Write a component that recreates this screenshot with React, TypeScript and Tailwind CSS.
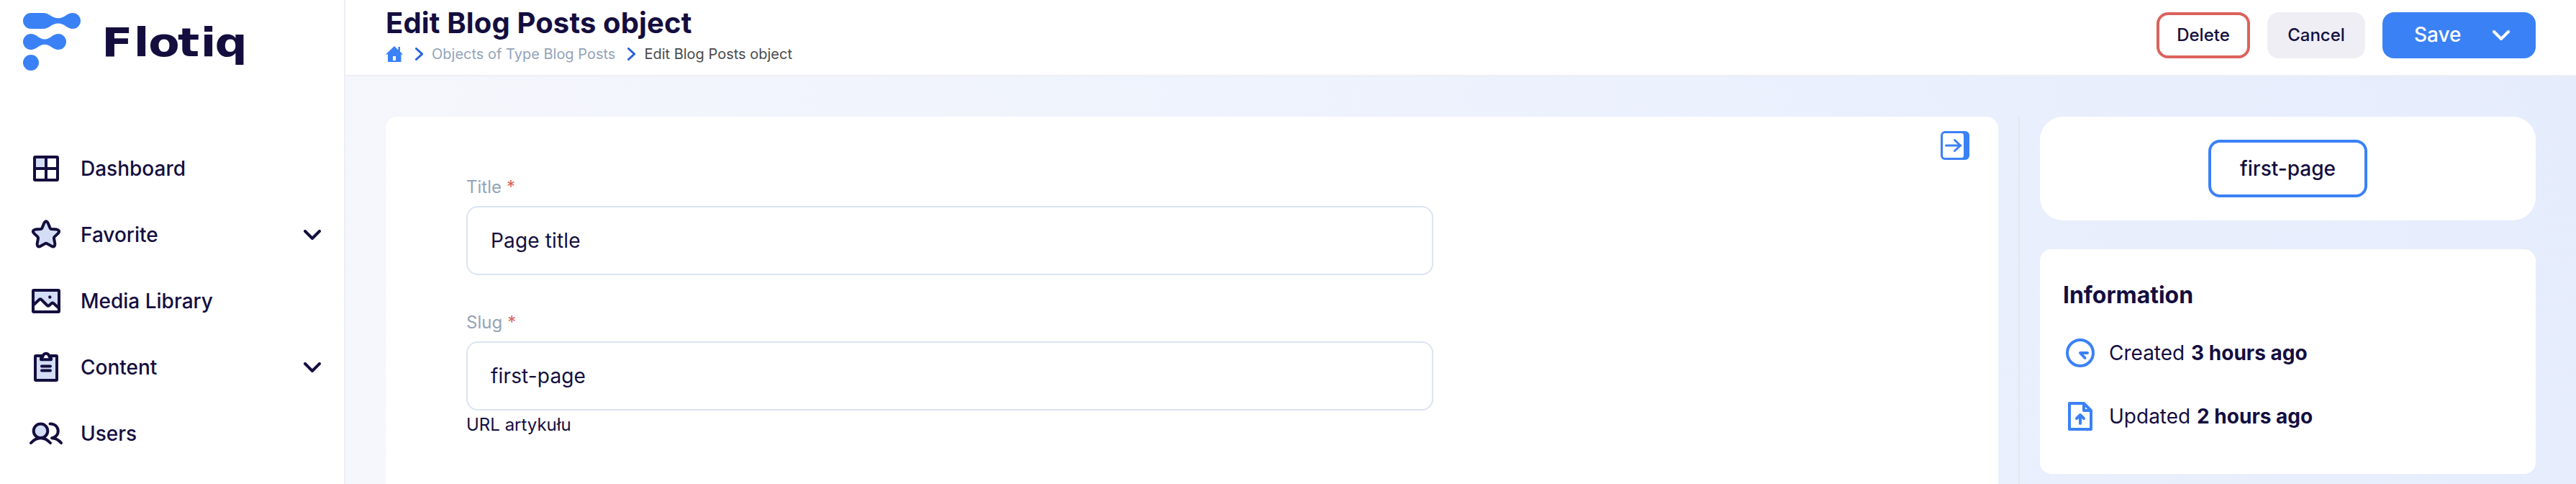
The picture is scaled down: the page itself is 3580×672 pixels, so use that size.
import type { ReactNode } from "react";

const INK = "#140e3f";
const BLUE = "#3b81f6";
const PALE = "#d3ddf5";

function Chevron({ className, stroke }: { className: string; stroke: string }) {
  return (
    <svg className={className} viewBox="0 0 24 14" fill="none" stroke={stroke} strokeWidth="4" strokeLinecap="round" strokeLinejoin="round">
      <path d="M2 2L12 12L22 2" />
    </svg>
  );
}

function CrumbArrow() {
  return (
    <svg className="ml-[17px] h-[18px] w-[11px]" viewBox="0 0 11 18" fill="none" stroke="#2563d9" strokeWidth="3" strokeLinecap="round">
      <path d="M1.500 1.500L9.500 9L1.500 16.500" />
    </svg>
  );
}

function Logo() {
  return (
    <svg className="block h-[100px] w-[360px]" viewBox="0 0 360 100">
      <g fill={BLUE}>
        <path d="M43 18H60C68 18 72 25.200 81 25.200C90 25.200 93 18 101 18A11 11 0 0 1 101 40C93 40 90 32.500 81 32.500C72 32.500 68 40 60 40H43A11 11 0 0 1 43 18Z" />
        <path d="M43 47C51 47 54 54.500 62 54.500C70 54.500 73 47 81 47A11 11 0 0 1 81 69C73 69 70 61.800 62 61.800C54 61.800 51 69 43 69A11 11 0 0 1 43 47Z" />
        <circle cx="43" cy="87" r="11" />
      </g>
      <text transform="scale(1.15 1)" x="122.800 161.500 179.400 214.800 242.300 259.600" y="78" fill={INK} fontFamily="DejaVu Sans" fontWeight="700" fontSize="55">Flotiq</text>
    </svg>
  );
}

function NavIcon({ children }: { children: ReactNode }) {
  return (
    <svg className="h-12 w-12 shrink-0" viewBox="0 0 48 48" fill="none" stroke={INK} strokeWidth="4" strokeLinecap="round" strokeLinejoin="round">
      {children}
    </svg>
  );
}

function NavItem({ icon, label, more }: { icon: ReactNode; label: string; more?: boolean }) {
  return (
    <a className="flex h-[92px] items-center pl-10 pr-8">
      {icon}
      <span className="ml-6 flex-1 text-[28px] font-medium leading-10">{label}</span>
      {more && <Chevron className="h-[14px] w-6" stroke={INK} />}
    </a>
  );
}

function Field({ label, value, hint }: { label: string; value: string; hint?: string }) {
  return (
    <div className="w-[1344px]">
      <div className="flex h-11 gap-[7px] text-2xl leading-[36px] text-[#94a3b8]">
        {label}
        <span className="text-[#dc625c]">*</span>
      </div>
      <div className="flex h-24 items-center rounded-2xl border-2 border-[#dbe4f3] pl-8 text-[28px] tracking-[0.15px]">{value}</div>
      {hint && <div className="mt-[2px] h-[44px] text-2xl leading-[36px]">{hint}</div>}
    </div>
  );
}

export default function App() {
  return (
    <div className="flex h-[672px] w-[3580px] overflow-hidden bg-white font-['Inter',sans-serif] text-[#140e3f]">
      <aside className="w-[480px] shrink-0 border-r-2 border-[#eeeef6]">
        <Logo />
        <nav className="mt-[88px]">
          <NavItem
            label="Dashboard"
            icon={
              <NavIcon>
                <path d="M8 8H24V24H8Z" fill={PALE} stroke="none" />
                <rect x="8" y="8" width="32" height="32" rx="1" />
                <path d="M24 8V40M8 24H40" />
              </NavIcon>
            }
          />
          <NavItem
            more
            label="Favorite"
            icon={
              <NavIcon>
                <path fill={PALE} d="M21.300 7.800Q24 2.600 26.700 7.800L29.500 14.500Q30 15.800 31.500 16L38.600 16.600Q44.400 17.900 40.600 22.100L35.600 26.900Q34.700 27.900 35 29.200L36.300 36.200Q36.600 42.300 31.300 39.600L25.300 36.300Q24 35.500 22.700 36.300L16.700 39.600Q11.400 42.300 11.700 36.200L13 29.200Q13.300 27.900 12.400 26.900L7.400 22.100Q3.600 17.900 9.400 16.600L16.500 16Q18 15.800 18.500 14.500Z" />
              </NavIcon>
            }
          />
          <NavItem
            label="Media Library"
            icon={
              <NavIcon>
                <path d="M6 9H42V34L33 26L27 32L16 21L6 31Z" fill={PALE} stroke="none" />
                <rect x="6" y="9" width="36" height="30" rx="1" />
                <path d="M6 30L14.500 22Q16 20.600 17.500 22L25.500 30Q27 31.400 28.500 30L31.500 27.200Q33 26 34.500 27.200L42 34" />
                <circle cx="29.300" cy="18.500" r="2.200" fill={INK} stroke="none" />
              </NavIcon>
            }
          />
          <NavItem
            more
            label="Content"
            icon={
              <NavIcon>
                <rect x="9" y="8" width="30" height="34" rx="1" fill={PALE} />
                <path fill="#fff" d="M17 13.200V11.500Q17.200 9.600 19.200 9.400Q20.500 4.800 24 4.800Q27.500 4.800 28.800 9.400Q30.800 9.600 31 11.500V13.200Z" />
                <path d="M18 22.500H30M18 28.500H30" />
              </NavIcon>
            }
          />
          <NavItem
            label="Users"
            icon={
              <NavIcon>
                <circle cx="16.500" cy="20.300" r="9.800" fill={PALE} />
                <path d="M3 37Q9 30.300 16.500 30.300Q24 30.300 30 37M29.500 10.500A9.800 9.800 0 0 1 32 30.300Q39.500 30.500 45 37" />
              </NavIcon>
            }
          />
        </nav>
      </aside>

      <div className="flex min-w-0 flex-1 flex-col">
        <header className="flex h-[106px] shrink-0 justify-between border-b-2 border-[#eeeef4] bg-white pl-14 pr-14">
          <div>
            <h1 className="mt-2 text-[40px] font-bold leading-[48px] tracking-[0.14px]">Edit Blog Posts object</h1>
            <div className="mt-px flex h-9 items-center text-xl">
              <svg className="h-[22px] w-6" viewBox="0 0 24 22" fill={BLUE}>
                <path fillRule="evenodd" d="M12 0L17.500 5.400V1H20V7.800L24 11.600H21.500V22H3V11.600H0ZM10 14V20H14V14Z" />
              </svg>
              <CrumbArrow />
              <span className="ml-3 text-[#94a3b8]">Objects of Type Blog Posts</span>
              <CrumbArrow />
              <span className="ml-3 text-[#4a4a4a]">Edit Blog Posts object</span>
            </div>
          </div>
          <div className="mt-[17px] flex h-16 gap-6 text-2xl font-medium">
            <button className="w-[130px] rounded-2xl border-4 border-[#dc625c]">Delete</button>
            <button className="w-[136px] rounded-2xl bg-[#eeeef4]">Cancel</button>
            <button className="flex w-[213px] items-center justify-between rounded-2xl bg-[#3b81f6] pl-11 pr-9 text-[28px] text-white">
              Save
              <Chevron className="h-[14px] w-6" stroke="#fff" />
            </button>
          </div>
        </header>

        <main className="flex min-h-0 flex-1 bg-linear-[75deg] from-[#f6f7fc] via-[#edf2fd] to-[#e5ecfc] pl-14 pr-14 pt-14">
          <section className="flex w-[2241px] justify-between rounded-t-2xl bg-white pl-28 pr-10">
            <div className="flex flex-col gap-12 pt-20">
              <Field label="Title" value="Page title" />
              <Field label="Slug" value="first-page" hint="URL artykułu" />
              <Field label="Content" value="" />
            </div>
            <svg className="mt-5 h-10 w-10" viewBox="0 0 40 40" fill="none">
              <rect width="40" height="40" rx="6" fill={BLUE} />
              <rect x="3" y="3" width="29" height="34" rx="3" fill="#fff" />
              <path d="M7.500 20H28M19.500 12.500L27.500 20L19.500 27.500" stroke={BLUE} strokeWidth="3" strokeLinecap="round" strokeLinejoin="round" />
            </svg>
          </section>
          <div className="ml-7 w-[2px] bg-[#e5e7eb]" />
          <div className="ml-7 flex w-[689px] flex-col gap-10">
            <div className="flex h-36 items-center justify-center rounded-[32px] bg-white">
              <button className="h-20 w-[221px] rounded-2xl border-4 border-[#3b81f6] text-[28px] font-medium">first-page</button>
            </div>
            <div className="h-[312px] rounded-2xl bg-white px-8 pt-[44px]">
              <h2 className="text-[32px] font-bold leading-[40px] tracking-[-0.05px]">Information</h2>
              <div className="mt-10 flex h-10 items-center text-[28px]">
                <svg className="mr-[19px] ml-[3px] h-[42px] w-[42px]" viewBox="0 0 42 42" fill="none" stroke={BLUE} strokeWidth="4" strokeLinecap="round" strokeLinejoin="round">
                  <circle cx="21" cy="21" r="18" />
                  <path d="M31 21H21L27.500 28" />
                </svg>
                <span>Created <b className="ml-px font-bold">3 hours ago</b></span>
              </div>
              <div className="mt-12 flex h-10 items-center text-[28px]">
                <svg className="mr-[19px] ml-[3px] h-[42px] w-[42px]" viewBox="0 0 42 42" fill="none" stroke={BLUE} strokeWidth="4" strokeLinecap="round" strokeLinejoin="round">
                  <path d="M6 3H26L36 13V39H6ZM26 3V13H36M21 31V20M16 24L21 19L26 24" />
                </svg>
                <span>Updated <b className="ml-px font-bold">2 hours ago</b></span>
              </div>
            </div>
          </div>
        </main>
      </div>
    </div>
  );
}
